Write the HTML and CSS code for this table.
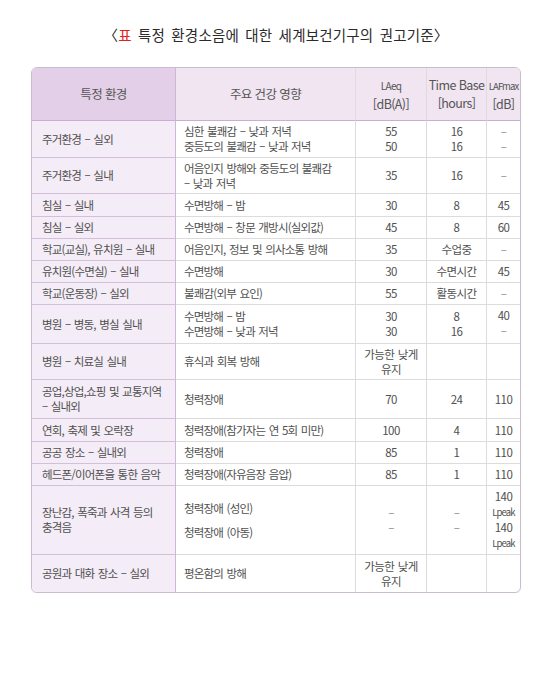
FILE: index.html
```html
<!DOCTYPE html>
<html lang="ko">
<head>
<meta charset="utf-8">
<link rel="stylesheet" href="styles.css">
</head>
<body>
<div class="page">
  <h1 class="title">〈<span class="red">표</span> 특정 환경소음에 대한 세계보건기구의 권고기준〉</h1>
  <div class="box">
    <table class="tbl">
      <colgroup>
        <col class="c1"><col class="c2"><col class="c3"><col class="c4"><col class="c5">
      </colgroup>
      <thead>
        <tr class="r53">
          <th class="k">특정 환경</th>
          <th>주요 건강 영향</th>
          <th><span class="sm">LAeq</span><br>[dB(A)]</th>
          <th>Time Base<br>[hours]</th>
          <th><span class="xs">LAFmax</span><br>[dB]</th>
        </tr>
      </thead>
      <tbody>
        <tr class="r37">
          <td class="k">주거환경 – 실외</td>
          <td class="t">심한 불쾌감 – 낮과 저녁<br>중등도의 불쾌감 – 낮과 저녁</td>
          <td class="n">55<br>50</td>
          <td class="n">16<br>16</td>
          <td class="n d">–<br>–</td>
        </tr>
        <tr class="r36">
          <td class="k">주거환경 – 실내</td>
          <td class="t">어음인지 방해와 중등도의 불쾌감<br>– 낮과 저녁</td>
          <td class="n">35</td>
          <td class="n">16</td>
          <td class="n d">–</td>
        </tr>
        <tr class="r23">
          <td class="k">침실 – 실내</td>
          <td class="t">수면방해 – 밤</td>
          <td class="n">30</td>
          <td class="n">8</td>
          <td class="n">45</td>
        </tr>
        <tr class="r22">
          <td class="k">침실 – 실외</td>
          <td class="t">수면방해 – 창문 개방시(실외값)</td>
          <td class="n">45</td>
          <td class="n">8</td>
          <td class="n">60</td>
        </tr>
        <tr class="r22">
          <td class="k">학교(교실), 유치원 – 실내</td>
          <td class="t">어음인지, 정보 및 의사소통 방해</td>
          <td class="n">35</td>
          <td class="n">수업중</td>
          <td class="n d">–</td>
        </tr>
        <tr class="r22">
          <td class="k">유치원(수면실) – 실내</td>
          <td class="t">수면방해</td>
          <td class="n">30</td>
          <td class="n">수면시간</td>
          <td class="n">45</td>
        </tr>
        <tr class="r22">
          <td class="k">학교(운동장) – 실외</td>
          <td class="t">불쾌감(외부 요인)</td>
          <td class="n">55</td>
          <td class="n">활동시간</td>
          <td class="n d">–</td>
        </tr>
        <tr class="r39">
          <td class="k">병원 – 병동, 병실 실내</td>
          <td class="t">수면방해 – 밤<br>수면방해 – 낮과 저녁</td>
          <td class="n">30<br>30</td>
          <td class="n">8<br>16</td>
          <td class="n top">40<br><span class="dd">–</span></td>
        </tr>
        <tr class="r36">
          <td class="k">병원 – 치료실 실내</td>
          <td class="t">휴식과 회복 방해</td>
          <td class="n">가능한 낮게<br>유지</td>
          <td class="n"></td>
          <td class="n"></td>
        </tr>
        <tr class="r39">
          <td class="k">공업,상업,쇼핑 및 교통지역<br>– 실내외</td>
          <td class="t">청력장애</td>
          <td class="n">70</td>
          <td class="n">24</td>
          <td class="n">110</td>
        </tr>
        <tr class="r23">
          <td class="k">연회, 축제 및 오락장</td>
          <td class="t">청력장애(참가자는 연 5회 미만)</td>
          <td class="n">100</td>
          <td class="n">4</td>
          <td class="n">110</td>
        </tr>
        <tr class="r22">
          <td class="k">공공 장소 – 실내외</td>
          <td class="t">청력장애</td>
          <td class="n">85</td>
          <td class="n">1</td>
          <td class="n">110</td>
        </tr>
        <tr class="r22">
          <td class="k">헤드폰/이어폰을 통한 음악</td>
          <td class="t">청력장애(자유음장 음압)</td>
          <td class="n">85</td>
          <td class="n">1</td>
          <td class="n">110</td>
        </tr>
        <tr class="r69">
          <td class="k">장난감, 폭죽과 사격 등의<br>충격음</td>
          <td class="t"><div class="gap">청력장애 (성인)</div><div>청력장애 (아동)</div></td>
          <td class="n d">–<br>–</td>
          <td class="n d">–<br>–</td>
          <td class="n peak">140<br><span class="xs">Lpeak</span><br>140<br><span class="xs">Lpeak</span></td>
        </tr>
        <tr class="r37 last">
          <td class="k">공원과 대화 장소 – 실외</td>
          <td class="t">평온함의 방해</td>
          <td class="n">가능한 낮게<br>유지</td>
          <td class="n"></td>
          <td class="n"></td>
        </tr>
      </tbody>
    </table>
  </div>
</div>
</body>
</html>
```

FILE: styles.css
```css
html, body {
  margin: 0;
  padding: 0;
  background: #ffffff;
}

.page {
  width: 550px;
  font-family: "Noto Sans CJK KR", "Noto Sans", sans-serif;
  color: #505050;
}

.title {
  margin: 0 0 23px 0;
  padding-top: 26px;
  text-align: center;
  font-size: 14.5px;
  font-weight: normal;
  line-height: 18px;
  color: #2b2b2b;
  letter-spacing: 0.2px;
  word-spacing: 2px;
  padding-left: 2px;
}

.red {
  color: #e2231a;
}

.box {
  margin-left: 31px;
  width: 488px;
  border: 1px solid #c9bccd;
  border-radius: 6px;
  overflow: hidden;
  box-shadow: 0 1px 1px rgba(0, 0, 0, 0.08);
}

.tbl {
  width: 488px;
  table-layout: fixed;
  border-collapse: separate;
  border-spacing: 0;
  font-size: 11.5px;
  line-height: 15px;
  letter-spacing: -0.8px;
  word-spacing: 1px;
}

.c1 { width: 144px; }
.c2 { width: 180px; }
.c3 { width: 71px; }
.c4 { width: 60px; }
.c5 { width: 33px; }

.tbl th,
.tbl td {
  padding: 0;
  border-right: 1px solid #dcdcdc;
  border-bottom: 1px solid #dcdcdc;
  vertical-align: middle;
  white-space: nowrap;
  overflow: hidden;
}

.tbl th:last-child,
.tbl td:last-child {
  border-right: none;
}

.tbl th {
  background: #f0e5f1;
  font-weight: normal;
  font-size: 12.5px;
  line-height: 18px;
  color: #555555;
  text-align: center;
  border-bottom-color: #c8aed1;
  letter-spacing: -0.6px;
  word-spacing: 0;
}

.tbl th.k {
  background: #e3cfe7;
  border-right-color: #cfb8d6;
}

.tbl td.k {
  background: #f4ecf6;
  padding-left: 10px;
  border-right-color: #cfb8d6;
  border-bottom-color: #d4bfdb;
}

.tbl td.t {
  padding-left: 8px;
}

.tbl td.n {
  text-align: center;
  letter-spacing: -0.6px;
}

.tbl td.d,
.dd {
  color: #8a8a8a;
}

.tbl td.top {
  vertical-align: top;
  padding-top: 3px;
}

.tbl .last td {
  border-bottom: none;
}

.sm {
  font-size: 10px;
  letter-spacing: -0.7px;
}

.xs {
  font-size: 9.5px;
  letter-spacing: -0.9px;
}

.peak {
  line-height: 15px;
}

.gap {
  margin-bottom: 9px;
}

.r53 { height: 53px; }
.r37 { height: 37px; }
.r36 { height: 36px; }
.r23 { height: 23px; }
.r22 { height: 22px; }
.r39 { height: 39px; }
.r69 { height: 69px; }
```
